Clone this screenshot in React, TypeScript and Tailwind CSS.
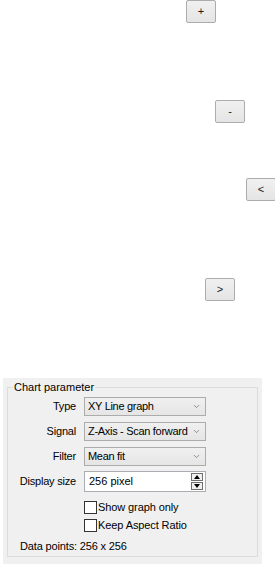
import { ChevronDown } from "lucide-react";

const font = { fontFamily: '"Liberation Sans", Arial, sans-serif' };

function NavBtn({ children }: { children: React.ReactNode }) {
  return (
    <button className="h-[23px] w-[30px] rounded-[2px] border border-[#acacac] bg-gradient-to-b from-[#f0f0f0] to-[#e5e5e5] text-[11px] leading-none text-[#1a1a1a] grid place-items-center">
      {children}
    </button>
  );
}

function Combo({ value }: { value: string }) {
  return (
    <div className="h-[19px] w-[122px] border border-[#acacac] bg-gradient-to-b from-[#f0f0f0] to-[#e5e5e5] flex items-center justify-between pl-[3px] pr-[4px]">
      <span className="text-[11px] tracking-[-0.3px] text-black whitespace-nowrap">{value}</span>
      <ChevronDown size={9} strokeWidth={2} className="text-[#707070] shrink-0" />
    </div>
  );
}

function Row({ label, children }: { label: string; children: React.ReactNode }) {
  return (
    <div className="flex items-center h-[25px]">
      <div className="w-[76px] text-right pr-[8px] text-[11px] tracking-[-0.2px] text-black">{label}</div>
      {children}
    </div>
  );
}

function Check({ label }: { label: string }) {
  return (
    <div className="flex items-center h-[18px] pl-[76px]">
      <div className="h-[13px] w-[13px] border border-[#333] bg-white" />
      <span className="ml-[1px] text-[11px] tracking-[-0.1px] text-black">{label}</span>
    </div>
  );
}

export default function App() {
  return (
    <div className="w-[275px] h-[564px] bg-white overflow-hidden" style={font}>
      {/* chart navigation buttons */}
      <div className="pl-[186px]"><NavBtn>+</NavBtn></div>
      <div className="pl-[215px] mt-[77px]"><NavBtn>-</NavBtn></div>
      <div className="pl-[246px] mt-[55px]"><NavBtn>&lt;</NavBtn></div>
      <div className="pl-[205px] mt-[77px]"><NavBtn>&gt;</NavBtn></div>

      {/* chart parameter panel */}
      <div className="mt-[77px] ml-[3px] w-[259px] h-[186px] bg-[#f0f0f0] pt-[9px] px-[4px]">
        <div className="border border-[#dcdcdc] h-[170px]">
          <div className="-mt-[7px] ml-[5px] px-[1px] w-fit bg-[#f0f0f0] text-[11px] leading-[13px] text-black">
            Chart parameter
          </div>
          <Row label="Type"><Combo value="XY Line graph" /></Row>
          <Row label="Signal"><Combo value="Z-Axis - Scan forward" /></Row>
          <Row label="Filter"><Combo value="Mean fit" /></Row>
          <Row label="Display size">
            <div className="h-[21px] w-[122px] border border-[#abadb3] bg-white flex items-center justify-between pl-[4px] pr-[2px]">
              <span className="text-[11px] text-black">256 pixel</span>
              <div className="flex flex-col gap-[1px]">
                <div className="h-[8px] w-[12px] border border-[#707070] bg-[#f0f0f0] grid place-items-center">
                  <div className="w-0 h-0 border-l-[3px] border-r-[3px] border-b-[4px] border-l-transparent border-r-transparent border-b-black" />
                </div>
                <div className="h-[8px] w-[12px] border border-[#707070] bg-[#f0f0f0] grid place-items-center">
                  <div className="w-0 h-0 border-l-[3px] border-r-[3px] border-t-[4px] border-l-transparent border-r-transparent border-t-black" />
                </div>
              </div>
            </div>
          </Row>
          <div className="mt-[4px]">
            <Check label="Show graph only" />
            <Check label="Keep Aspect Ratio" />
          </div>
          <div className="mt-[6px] pl-[12px] text-[11px] tracking-[-0.15px] leading-[13px] text-black">Data points: 256 x 256</div>
        </div>
      </div>
    </div>
  );
}
